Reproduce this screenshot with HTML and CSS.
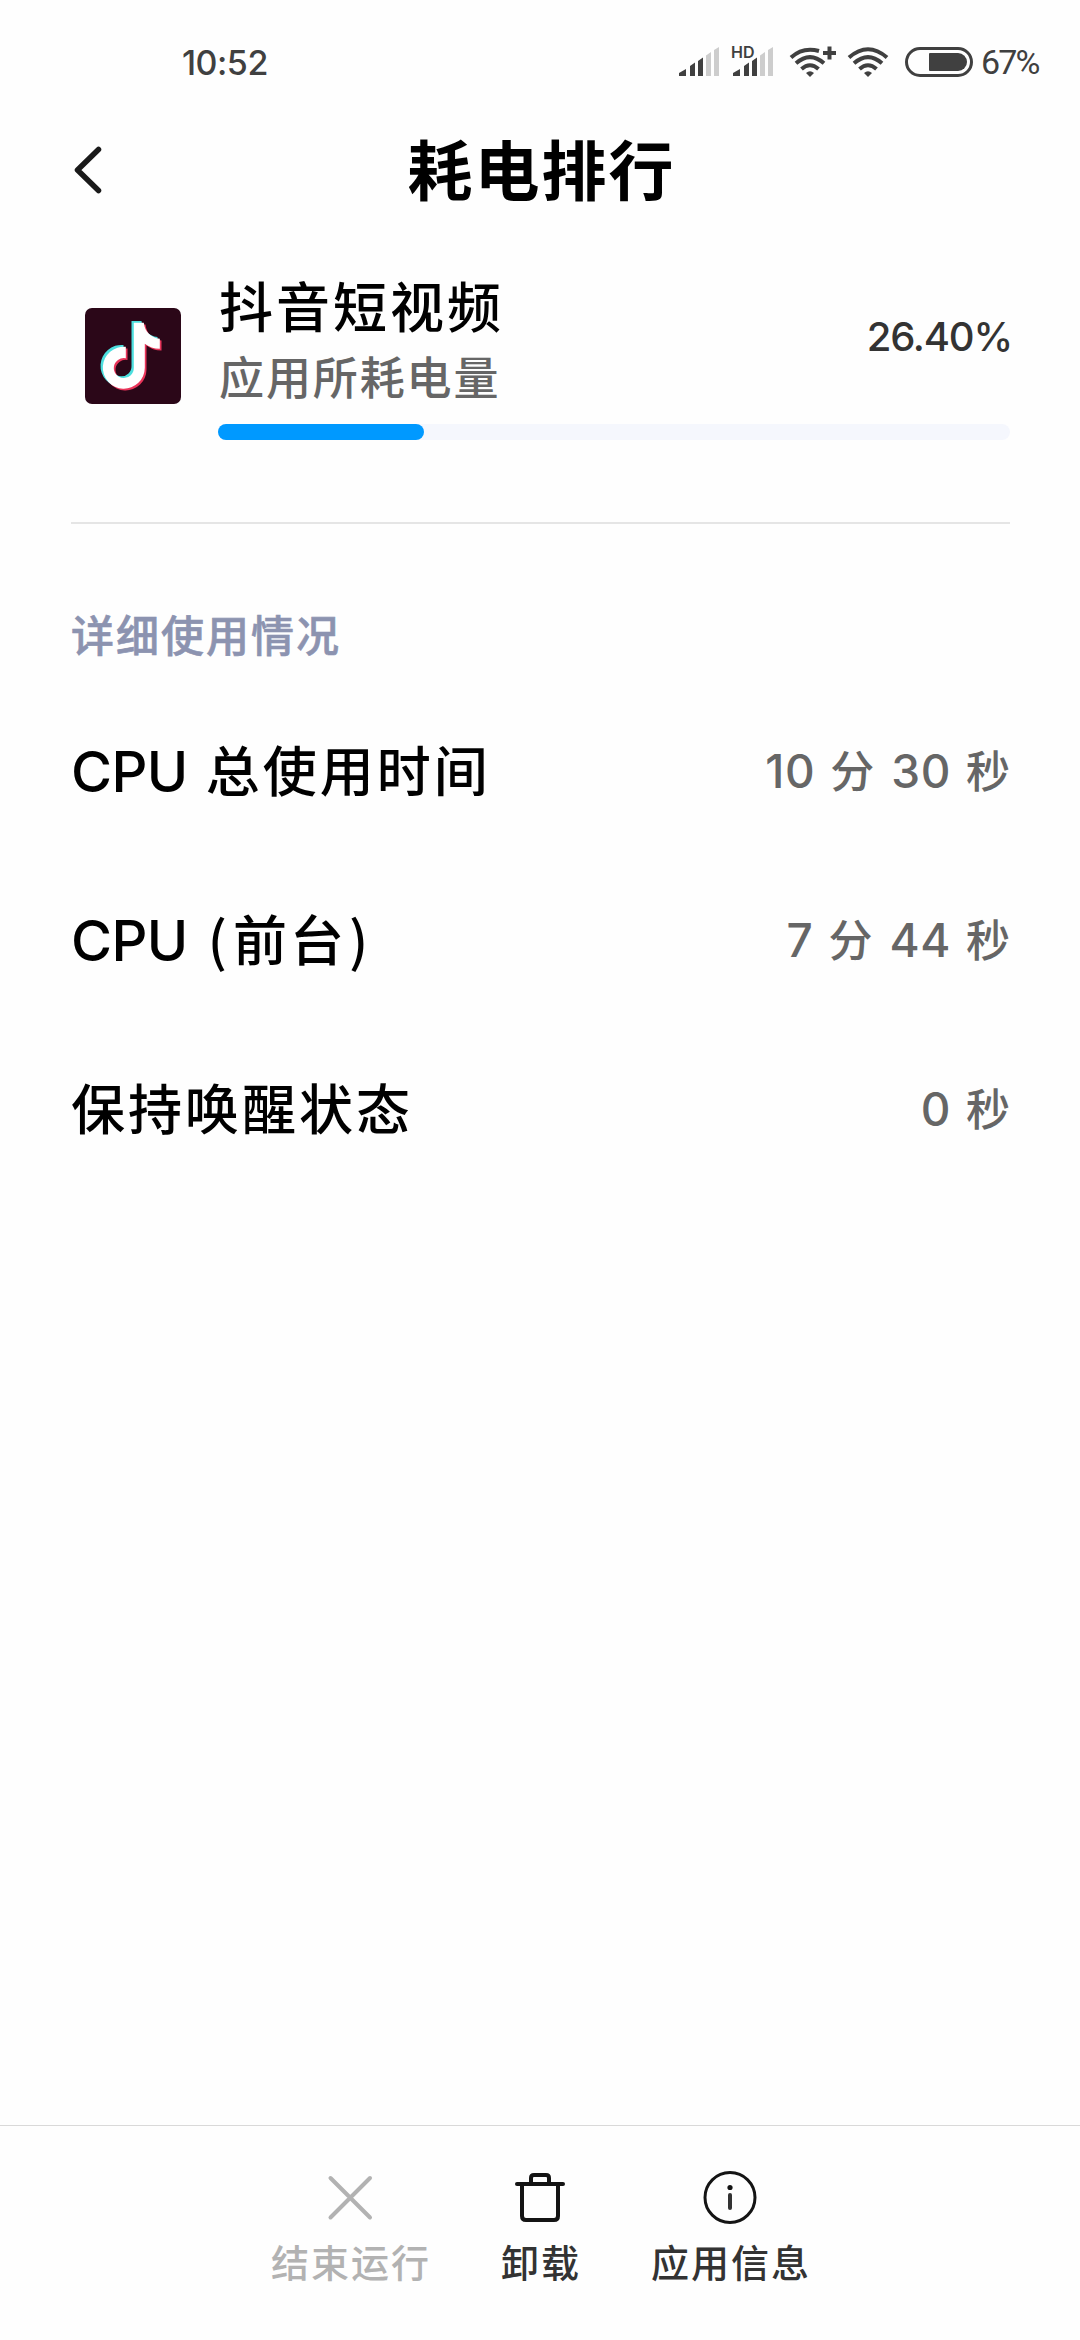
FILE: index.html
```
<!DOCTYPE html>
<html lang="zh-CN">
<head>
	<meta charset="UTF-8">
	<meta name="viewport" content="width=device-width, initial-scale=1.0">
	<title>耗电排行</title>
	<link rel="stylesheet" href="styles.css">
</head>
<body>
	<div class="status-bar">
		<span class="time">10:52</span>
		<div class="status-icons">
			<svg class="signal" width="42" height="32" viewBox="0 0 42 32">
				<path d="M1 30V27L8 23V30ZM12 30V20L17 16.500V30ZM20 30V15L25 11.500V30Z" fill="#404040"/>
				<path d="M28 30V9.500L33 6V30ZM36 30V4L41 1V30Z" fill="#cdcdcd"/>
			</svg>
			<div class="signal-hd">
				<svg class="signal" width="42" height="32" viewBox="0 0 42 32">
					<path d="M1 30V27L8 23V30ZM12 30V20L17 16.500V30ZM20 30V15L25 11.500V30Z" fill="#404040"/>
					<path d="M28 30V9.500L33 6V30ZM36 30V4L41 1V30Z" fill="#cdcdcd"/>
				</svg>
				<span class="hd">HD</span>
			</div>
			<svg class="wifi-plus" width="48" height="32" viewBox="0 0 48 32">
				<g fill="none" stroke="#404040" stroke-width="4">
					<path d="M2 11.500Q14 .5 30 5"/>
					<path d="M7 17.300Q21 5 35 17.300"/>
					<path d="M12.500 23Q21 15.500 29.500 23"/>
					<path d="M34 7H47M40.500 .5V13.500" stroke-width="4"/>
				</g>
				<path d="M17 27Q21 23.500 25 27L21 31Z" fill="#404040"/>
			</svg>
			<svg class="wifi" width="42" height="32" viewBox="0 0 42 32">
				<g fill="none" stroke="#404040" stroke-width="4">
					<path d="M2 11.500Q21 -5 40 11.500"/>
					<path d="M7 17.300Q21 5 35 17.300"/>
					<path d="M12.500 23Q21 15.500 29.500 23"/>
				</g>
				<path d="M17 27Q21 23.500 25 27L21 31Z" fill="#404040"/>
			</svg>
			<svg class="battery" width="68" height="30" viewBox="0 0 68 30">
				<rect x="1.500" y="1.500" width="65" height="27" rx="13.500" fill="none" stroke="#404040" stroke-width="3"/>
				<path d="M25 6H53A9 9 0 0 1 53 24H25Q24 24 24 23V7Q24 6 25 6Z" fill="#404040"/>
			</svg>
			<span class="battery-level">67%</span>
		</div>
	</div>

	<header class="header">
		<svg class="back" width="30" height="48" viewBox="0 0 30 48">
			<path d="M26.500 3.500L5.500 24L26.500 44.500" fill="none" stroke="#1a1a1a" stroke-width="5.500" stroke-linecap="round" stroke-linejoin="round"/>
		</svg>
		<h1 class="title">耗电排行</h1>
	</header>

	<main class="content">
		<section class="app">
			<svg class="app-icon" width="96" height="96" viewBox="0 0 96 96">
				<defs>
					<path id="note" d="M48 14H58C59 23 65 29 74 30V40C68 40 63 38 59 35V59A21 21 0 1 1 40 38V49.500A10 10 0 1 0 48 59Z"/>
				</defs>
				<rect width="96" height="96" rx="7" fill="#2b0718"/>
				<use href="#note" x="2.500" y="2.500" fill="#e9355a"/>
				<use href="#note" x="-1.500" y="-1" fill="#4ddfdf"/>
				<use href="#note" x="0.800" y="0.800" fill="#fff"/>
			</svg>
			<div class="app-info">
				<div class="app-row">
					<div class="app-text">
						<div class="app-name">抖音短视频</div>
						<div class="app-desc">应用所耗电量</div>
					</div>
					<div class="percent">26.40%</div>
				</div>
				<div class="progress">
					<div class="progress-fill" style="width: 26%"></div>
				</div>
			</div>
		</section>

		<h2 class="section-title">详细使用情况</h2>
		<ul class="details">
			<li class="detail">
				<span class="label"><span class="cpu">CPU</span>总使用时间</span>
				<span class="value"><span class="num">10</span>分<span class="num mid">30</span>秒</span>
			</li>
			<li class="detail">
				<span class="label"><span class="cpu">CPU</span><span class="paren open">(</span>前台<span class="paren">)</span></span>
				<span class="value"><span class="num">7</span>分<span class="num mid">44</span>秒</span>
			</li>
			<li class="detail">
				<span class="label">保持唤醒状态</span>
				<span class="value"><span class="num">0</span>秒</span>
			</li>
		</ul>
	</main>

	<nav class="toolbar">
		<div class="tool disabled">
			<svg width="56" height="56" viewBox="0 0 56 56">
				<path d="M8.500 9L48 48.500M48 9L8.500 48.500" fill="none" stroke="#b2b2b2" stroke-width="4" stroke-linecap="round"/>
			</svg>
			<span>结束运行</span>
		</div>
		<div class="tool">
			<svg width="56" height="56" viewBox="0 0 56 56">
				<g fill="none" stroke="#141414" stroke-width="4" stroke-linecap="round">
					<path d="M5 15H51"/>
					<path d="M10 15V47Q10 51 14 51H42Q46 51 46 47V15"/>
					<path d="M19 14V9Q19 6 22 6H34Q37 6 37 9V14"/>
				</g>
			</svg>
			<span>卸载</span>
		</div>
		<div class="tool">
			<svg width="56" height="56" viewBox="0 0 56 56">
				<circle cx="28" cy="28.500" r="25" fill="none" stroke="#141414" stroke-width="3"/>
				<circle cx="28" cy="18.500" r="2.600" fill="#141414"/>
				<path d="M28 26V39" stroke="#333" stroke-width="4" stroke-linecap="round"/>
			</svg>
			<span>应用信息</span>
		</div>
	</nav>
</body>
</html>
```
FILE: styles.css
```
* {
	box-sizing: border-box;
	margin: 0;
	padding: 0;
}

body {
	display: flex;
	flex-direction: column;
	width: 1080px;
	height: 2340px;
	background-color: #fefefe;
	color: #000;
	font-family: Inter, "Noto Sans CJK SC", sans-serif;
	font-weight: 500;
	overflow: hidden;
}

svg {
	display: block;
	flex-shrink: 0;
}

.status-bar {
	display: flex;
	justify-content: space-between;
	align-items: center;
	height: 124px;
	padding: 0 42px 0 182px;
	color: #404040;
}

.time {
	font-size: 34px;
	letter-spacing: -0.5px;
}

.status-icons {
	display: flex;
	align-items: center;
}

.signal-hd {
	position: relative;
	margin: 0 15px 0 12px;
}

.hd {
	position: absolute;
	top: -2px;
	left: -1px;
	font-size: 16px;
	font-weight: 600;
	line-height: 16px;
}

.wifi {
	margin: 0 16px 0 10px;
}

.battery-level {
	width: 57px;
	margin-left: 8px;
	font-family: Roboto, sans-serif;
	font-size: 34px;
	font-weight: 400;
	letter-spacing: -1.900px;
}

.header {
	display: grid;
	grid-template-columns: 30px 1fr 30px;
	align-items: center;
	height: 92px;
	padding: 0 72px;
}

.title {
	padding: 4px 0 0 3px;
	font-size: 65px;
	font-weight: 700;
	letter-spacing: 2px;
	line-height: 88px;
	text-align: center;
}

.content {
	flex: 1;
	padding: 0 70px 0 71px;
}

.app {
	display: flex;
	height: 308px;
	padding: 50px 0 0 14px;
	border-bottom: 2px solid #e5e5e5;
}

.app-icon {
	margin-top: 42px;
}

.app-info {
	flex: 1;
	margin-left: 37px;
}

.app-row {
	display: flex;
	justify-content: space-between;
}

.app-text {
	padding: 3px 0 0 1px;
}

.app-name {
	font-size: 54px;
	line-height: 80px;
	letter-spacing: 3px;
}

.app-desc {
	color: #666;
	font-size: 45px;
	line-height: 60px;
	letter-spacing: 1.900px;
}

.percent {
	margin: 47px -2px 0 0;
	color: #333;
	font-size: 40px;
	line-height: 48px;
	letter-spacing: -1.200px;
}

.progress {
	height: 16px;
	margin-top: 15px;
	border-radius: 8px;
	background-color: #f5f7fd;
}

.progress-fill {
	height: 16px;
	border-radius: 8px;
	background-color: #0099ff;
}

.section-title {
	margin-top: 82px;
	color: #8c93b0;
	font-size: 43px;
	font-weight: 500;
	line-height: 60px;
	letter-spacing: 2px;
	-webkit-text-stroke: 0.600px #8c93b0;
}

.details {
	margin-top: 22px;
	list-style: none;
}

.detail {
	display: flex;
	justify-content: space-between;
	align-items: center;
	height: 169px;
}

.label {
	font-size: 54px;
	letter-spacing: 3px;
	line-height: 80px;
}

.cpu {
	margin-right: 18px;
	font-size: 56px;
	letter-spacing: -0.600px;
}

.paren {
	font-family: "Noto Sans CJK SC", sans-serif;
	line-height: 1;
	margin-left: 2px;
}

.open {
	margin: 0 3px 0 2px;
}

.value {
	padding-bottom: 2px;
	color: #666;
	font-size: 44px;
	line-height: 80px;
}

.num {
	margin-right: 15px;
	font-size: 46px;
	letter-spacing: 0.600px;
}

.mid {
	margin-left: 17px;
}

.toolbar {
	display: flex;
	justify-content: center;
	height: 215px;
	padding-top: 43px;
	border-top: 1px solid #d9d9d9;
	color: #333;
	font-size: 38px;
}

.tool {
	display: flex;
	flex-direction: column;
	align-items: center;
	width: 190px;
	line-height: 56px;
	letter-spacing: 2px;
	white-space: nowrap;
}

.tool span {
	margin-top: 10px;
	padding-left: 2px;
}

.disabled {
	color: #b2b2b2;
}
```
